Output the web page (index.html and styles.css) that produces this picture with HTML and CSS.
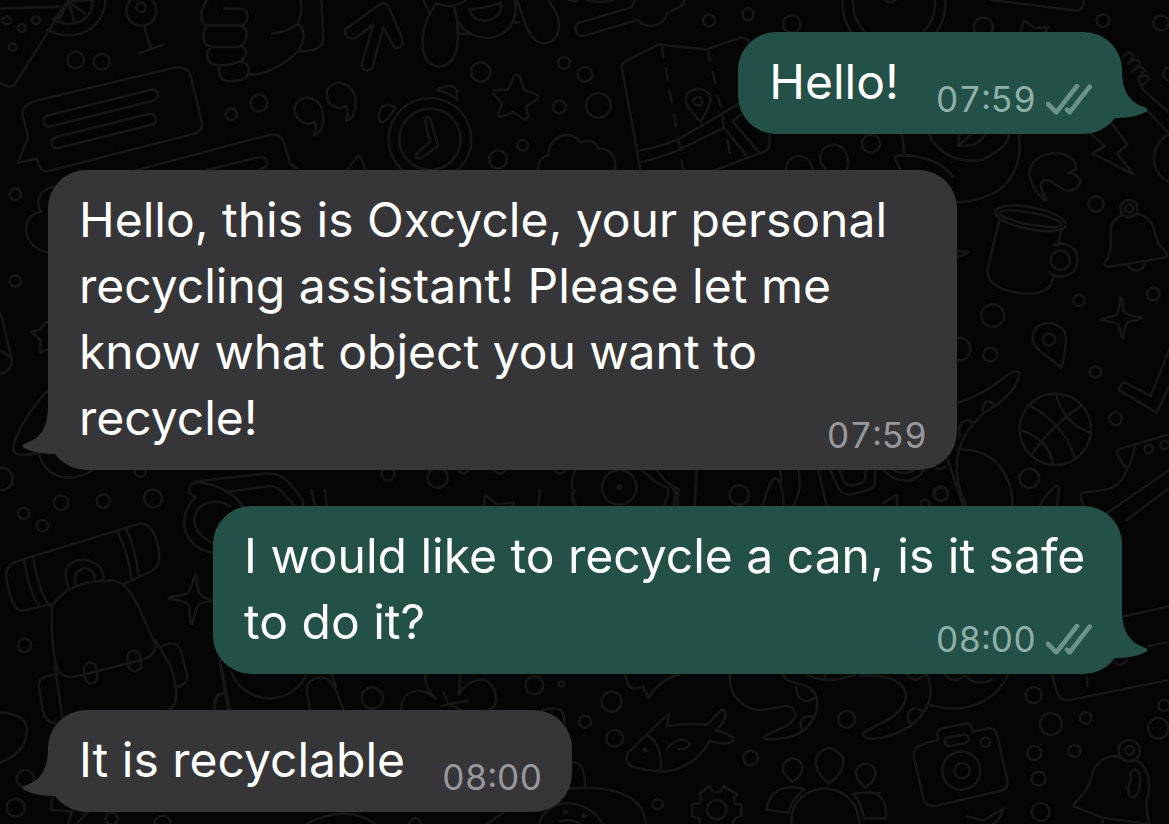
FILE: index.html
```
<!DOCTYPE html>
<html lang="en">
<head>
    <meta charset="UTF-8">
    <meta name="viewport" content="width=device-width, initial-scale=1.0">
    <title>Oxcycle chat</title>
    <link rel="stylesheet" href="styles.css">
</head>
<body>
  <!-- doodle wallpaper -->
  <svg class="wallpaper" viewBox="0 0 3507 2472" preserveAspectRatio="xMidYMid slice" aria-hidden="true">
    <!-- pizza, lemon, cocktail, fist, arrow -->
    <g>
      <path d="M0 26L180 20M0 247Q28 266 42 256L205 0M175 65L205 5L222 62M205 5L255 40M205 5L160 60M205 5L270 0M278 0Q276 70 205 72Q180 70 165 60M316 0C312 92 220 130 142 90"/>
      <circle cx="20" cy="61" r="12"/><circle cx="66" cy="84" r="12"/><circle cx="108" cy="61" r="12"/><circle cx="38" cy="142" r="11"/>
      <circle cx="227" cy="180" r="25"/><circle cx="305" cy="185" r="24"/>
      <circle cx="424" cy="32" r="45"/><circle cx="423" cy="22" r="14"/>
      <path d="M432 78L453 146M415 160L490 134"/>
      <path d="M622 0C604 20 600 50 608 68Q612 76 625 76L720 76C748 70 750 30 725 27L673 25M622 76C606 90 606 125 622 136Q632 141 650 141L715 141C748 130 746 82 722 77M632 142C616 155 620 185 640 193Q670 200 705 190C744 178 744 146 728 140M658 198C652 220 664 244 690 244L722 240C755 230 752 190 728 186M748 224C800 226 860 190 895 152C920 118 912 80 892 72Q908 40 902 0M892 72Q870 94 817 101M964 0L970 120C968 145 935 154 902 154"/>
      <path d="M1036 88L1138 14Q1155 2 1166 22L1205 110Q1214 140 1192 144Q1184 145 1178 134L1150 82L1118 200Q1108 218 1092 208Q1084 202 1086 190L1120 74L1068 113Q1046 120 1036 100Z"/>
    </g>
    <!-- speech bubbles and commas -->
    <g>
      <path d="M110 302L520 204Q562 196 572 228L606 370Q608 394 580 402L150 512Q128 518 120 500L110 476L54 488L84 412L68 346Q64 314 110 302Z"/>
      <rect x="125" y="307" width="354" height="34" rx="17" transform="rotate(-14 302 324)"/>
      <rect x="150" y="376" width="322" height="34" rx="17" transform="rotate(-14 311 393)"/>
      <path d="M410 510L800 407Q842 396 852 428L872 494L890 504M620 510L775 472Q802 468 802 488Q804 500 780 508"/>
      <circle cx="694" cy="343" r="17"/><circle cx="777" cy="309" r="25"/>
      <path d="M945 366C915 380 884 360 884 328C886 285 955 278 967 330C974 370 964 400 942 406Q950 386 945 366ZM1038 318C1010 332 980 315 980 282C984 235 1056 236 1066 295C1070 330 1060 358 1038 362Q1046 340 1038 318Z"/>
      <path d="M1040 514L1070 470Q1077 464 1082 474L1100 514"/>
    </g>
    <!-- dog, clock, star, bone, map -->
    <g transform="translate(1140)">
      <path d="M130 0L150 45M165 15C120 80 115 160 150 190C185 215 225 190 232 135Q238 70 222 20M170 10Q220 30 258 0M232 100L268 102M222 20C225 80 275 115 325 114C385 108 415 60 404 0M404 68L418 66M412 0C430 60 450 130 490 130C535 130 545 80 530 40L505 0M268 28Q330 24 362 8C370 45 335 64 310 62Q275 58 268 28Z"/>
      <path d="M568 0L590 4M620 0Q660 12 700 0M764 0L755 22L598 68Q582 76 588 94Q596 112 618 106L772 60C800 90 852 80 862 38L905 18Q914 10 912 0"/>
      <circle cx="302" cy="216" r="29"/><circle cx="552" cy="189" r="18"/><circle cx="615" cy="223" r="22"/><circle cx="538" cy="321" r="19"/><circle cx="655" cy="316" r="37"/><circle cx="428" cy="436" r="16"/><circle cx="354" cy="478" r="27"/><circle cx="987" cy="62" r="18"/><circle cx="1104" cy="43" r="17"/>
      <path d="M402 230Q412 218 420 232L432 270L466 282Q482 290 468 300L438 320L444 350Q440 364 426 354L400 336L366 350Q350 350 356 338L366 308L340 282Q336 270 350 270L384 268Z"/>
      <circle cx="150" cy="418" r="124"/><circle cx="150" cy="418" r="92"/>
      <path d="M134 356Q144 344 152 360L172 430Q176 438 166 444L126 474Q106 480 108 464L150 424ZM170 270Q216 246 230 272L232 298Q200 276 170 270ZM46 322Q10 302 -2 335Q-8 360 6 368Q20 366 46 322Z"/>
      <path d="M474 514Q470 474 506 466C505 405 575 385 602 428Q640 412 656 446C695 445 712 475 704 514"/>
      <path d="M740 182L835 134L980 148L1080 114Q1100 110 1110 130M782 514L726 206Q722 190 740 182"/>
      <path d="M846 140L850 172M858 204L864 238M868 274L876 308M882 344L888 380M984 150L990 182M998 216L1006 250M1012 286L1022 318M1042 422L1050 460"/>
      <path d="M780 452Q830 444 895 418L1075 312M784 486Q850 470 905 446L1030 384M893 418L904 450M904 480L910 514M1028 350L1032 384L1100 466M1080 346L1058 364L1136 456M1170 400L1168 440Q1160 456 1140 460L1000 512"/>
      <path d="M962 366C930 330 912 310 918 292C926 258 985 258 992 294Q992 312 962 366Z"/><circle cx="954" cy="304" r="13"/>
    </g>
    <!-- plate, toothbrush, avocado -->
    <g transform="translate(2190)">
      <circle cx="492" cy="10" r="154"/><circle cx="492" cy="10" r="123"/><path d="M466 0Q480 16 496 0"/>
      <circle cx="54" cy="43" r="17"/><circle cx="185" cy="72" r="26"/><circle cx="760" cy="82" r="29"/><circle cx="1119" cy="62" r="19"/><circle cx="1293" cy="69" r="23"/><circle cx="1320" cy="222" r="20"/><circle cx="423" cy="431" r="27"/>
      <path d="M785 0L1040 32Q1060 34 1062 0M872 96L882 62L914 84L955 82L945 96"/>
      <path d="M1180 170Q1196 146 1212 168L1202 182M1194 190Q1220 168 1230 190L1214 208M1208 214Q1234 190 1244 212L1226 230M1224 236Q1248 216 1258 236L1240 254M1226 240L1240 270L1320 340M1240 320L1317 400Q1260 440 1275 500Q1290 535 1317 545"/>
      <path d="M168 510C166 460 240 450 248 510M290 510C255 480 270 434 314 434C350 438 360 480 350 510M515 400L523 462"/>
      <path d="M595 400C625 470 700 490 755 480C800 460 835 430 838 400M866 400C880 490 840 560 780 585Q730 605 670 608M690 400L682 438L728 435Q755 422 768 400M682 438L725 402M668 530Q620 465 510 466Q490 466 498 482L512 512"/>
    </g>
    <g transform="translate(2820 360)">
      <path d="M316 241C285 220 262 170 270 150C280 100 360 85 395 115Q415 138 405 150L384 158Q418 160 420 188Q412 218 372 210C345 195 330 175 310 182C298 190 302 210 320 240Z"/>
      <path d="M445 35L494 78L457 100L580 163L532 100L562 75L515 10"/>
      <!-- mug -->
      <ellipse cx="272" cy="295" rx="108" ry="33" transform="rotate(11 272 295)"/><ellipse cx="272" cy="296" rx="94" ry="18" transform="rotate(11 272 296)"/>
      <path d="M178 302L142 450C140 500 210 524 280 520Q335 516 340 470M362 335L356 366M340 376C375 362 415 380 412 424C408 470 355 482 328 456"/><circle cx="361" cy="421" r="29"/>
      <!-- bell -->
      <circle cx="567" cy="266" r="26"/><circle cx="567" cy="266" r="12"/>
      <path d="M548 284C510 300 510 330 512 360Q516 400 494 430Q492 442 510 440L670 414Q688 408 678 398C650 370 648 350 640 320Q625 285 588 282M564 435C575 460 612 455 614 428"/>
      <circle cx="468" cy="252" r="23"/><circle cx="417" cy="541" r="17"/><circle cx="640" cy="522" r="19"/><circle cx="158" cy="587" r="34"/><circle cx="151" cy="704" r="21"/><circle cx="56" cy="687" r="35"/><circle cx="466" cy="756" r="17"/><circle cx="527" cy="896" r="19"/><circle cx="268" cy="1075" r="29"/><circle cx="4" cy="1123" r="20"/>
      <path d="M541 532Q548 532 550 570Q554 586 606 592Q606 600 566 604Q556 610 548 656Q544 656 538 620Q534 606 482 600Q484 594 524 588Q538 580 541 532Z"/>
      <path d="M364 744C330 710 274 690 278 650C284 590 380 598 378 660Q376 700 364 744Z"/><circle cx="327" cy="659" r="18"/>
      <path d="M50 392L84 396Q70 408 50 410"/>
      <!-- ball -->
      <circle cx="346" cy="928" r="107"/>
      <path d="M268 856Q370 910 404 1010M348 822Q370 910 450 938M426 856Q330 920 274 1006M248 932Q330 960 338 1034"/>
      <path d="M50 850C110 830 160 800 195 770Q230 745 238 758C235 810 180 850 130 880C90 920 50 960 50 1050Q55 1110 80 1158M128 872Q132 842 148 845Q162 850 164 860M60 948C50 910 75 892 100 908M50 990C150 980 215 1050 218 1158M20 1010L70 1158M298 1158Q340 1090 356 1100Q358 1120 350 1158"/>
      <path d="M687 690L632 828L556 788Q546 786 536 810L650 878L687 800M687 943L536 988Q520 1000 562 1046C580 1020 580 1000 584 978M562 1046C550 1080 530 1106 490 1110L425 1118Q420 1130 430 1158M500 1180L687 1050M560 1200L687 1105"/>
      <circle cx="626" cy="987" r="13"/><circle cx="674" cy="975" r="13"/>
    </g>
    <!-- left edge -->
    <g transform="translate(0 480)">
      <circle cx="46" cy="103" r="17"/><circle cx="46" cy="363" r="17"/>
      <path d="M160 80C115 90 105 130 124 156C60 160 55 270 160 280M160 480L134 488L120 510L94 515L122 540L120 578L160 560M0 460Q10 480 14 510L36 600Q34 636 0 640M0 570L34 594M150 686C80 750 35 850 40 870Q44 888 80 884L110 880"/>
    </g>
    <!-- backpack -->
    <g transform="translate(0 1200)">
      <path d="M118 165C140 240 220 250 280 208"/>
      <circle cx="4" cy="237" r="34"/><circle cx="71" cy="340" r="17"/><circle cx="127" cy="377" r="17"/><circle cx="183" cy="308" r="22"/><circle cx="310" cy="303" r="20"/><circle cx="459" cy="295" r="27"/><circle cx="421" cy="214" r="17"/><circle cx="74" cy="736" r="20"/><circle cx="76" cy="1136" r="26"/><circle cx="47" cy="1223" r="27"/><circle cx="335" cy="1256" r="18"/><circle cx="488" cy="1272" r="25"/>
      <path d="M376 550L450 515C475 505 480 480 478 462C470 400 450 365 415 372L50 484C20 496 16 520 20 540C30 600 45 635 70 632L156 612M72 480C80 530 95 590 118 618M100 470C108 540 130 590 145 612M352 394C375 440 390 490 394 540M378 386C400 430 410 480 416 528"/>
      <path d="M205 560C180 500 215 478 255 480C300 484 315 520 308 542M226 550C218 515 245 504 258 505Q284 508 284 540"/>
      <path d="M155 620C190 560 260 540 340 542C380 548 400 590 420 630L465 730Q470 765 430 778L225 830Q180 836 170 800C155 740 155 680 155 620ZM165 800L186 950M465 720C500 780 520 800 525 850Q538 910 505 932M484 740C520 720 535 730 545 760L562 830Q560 855 530 862M172 822L140 828Q115 835 116 860L128 930Q138 970 168 970"/>
      <rect x="253" y="788" width="38" height="62" rx="19" transform="rotate(-8 272 819)"/><rect x="384" y="752" width="38" height="62" rx="19" transform="rotate(-8 403 783)"/>
      <path d="M640 604Q600 602 592 620L576 672Q570 674 568 620Q562 602 506 596Q510 590 555 584Q570 580 586 522Q592 524 592 560Q596 596 640 600"/>
      <path d="M600 245L585 247Q562 255 568 278L585 292C520 360 560 450 640 458M640 428C560 400 570 310 640 306Q670 304 690 320M660 790L684 930M668 880Q640 880 642 930"/>
      <path d="M0 938C60 940 85 960 80 1000C75 1050 40 1070 0 1088M158 1190L152 1230L215 1235L205 1272M262 1236L230 1272"/>
    </g>
    <!-- guitar, watch and boots between the second and third message -->
    <g transform="translate(600 1380)">
      <path d="M-15 65L200 40Q245 40 270 70L308 120Q312 130 305 140M78 96L210 78Q235 80 250 100L285 140M-15 65Q85 75 130 140M335 90L345 140M376 90L380 140M1020 90L1015 140M1125 90Q1105 115 1130 140M850 140L856 105L890 132L942 128L936 140"/>
      <circle cx="564" cy="42" r="20"/><circle cx="713" cy="53" r="30"/><circle cx="790" cy="24" r="16"/><circle cx="900" cy="24" r="17"/><circle cx="1080" cy="24" r="16"/>
    </g>
    <g transform="translate(1680 1320)">
      <path d="M45 90Q25 140 48 198M245 90L285 125L325 145C325 165 320 180 312 198M290 90L318 125L355 148L352 198M335 140L346 155L342 198M410 90L404 198M606 198C625 150 630 115 648 115Q665 120 672 198M660 90L664 125M715 90C725 130 715 170 700 198M775 90L800 198M810 90L832 138Q842 162 870 164L918 152Q945 145 945 125L945 90M838 90L852 125Q860 138 880 136L904 130Q918 124 918 90M972 90Q1000 125 1045 122Q1075 118 1092 90M1000 90Q1030 108 1062 90M968 190L1010 165Q1015 175 1010 198M1125 80Q1140 95 1155 80"/>
      <circle cx="178" cy="142" r="52"/><circle class="dot" cx="178" cy="142" r="10"/><circle cx="538" cy="165" r="29"/><circle cx="1142" cy="161" r="22"/><circle cx="1096" cy="192" r="13"/>
    </g>
    <!-- fish, gear, paw -->
    <g transform="translate(1680 1980)">
      <path d="M195 40Q205 90 225 86L250 80L265 114C290 75 310 60 358 42M510 40C500 110 560 155 610 150L680 138Q712 145 705 170C690 205 620 215 610 234Q630 245 700 228C770 200 790 120 755 90C730 60 680 80 668 40M710 80C705 120 745 135 764 112M725 208C712 175 745 160 762 175M740 44Q800 75 885 44M795 44L792 58"/>
      <circle cx="155" cy="125" r="30"/><circle cx="75" cy="185" r="18"/><circle cx="164" cy="235" r="25"/><circle cx="572" cy="294" r="22"/><circle cx="860" cy="178" r="25"/><circle cx="293" cy="433" r="15"/><circle cx="4" cy="72" r="8"/>
      <path d="M203 280L262 222L325 162Q330 160 320 198Q380 188 442 194L485 150Q496 146 496 170Q490 190 468 212Q510 220 522 238Q510 260 450 242C410 310 360 332 310 334Q260 332 215 320Q192 305 203 280ZM262 225C295 245 305 280 303 332M320 268C345 235 370 230 390 252Q380 268 356 268"/><circle class="dot" cx="255" cy="270" r="8"/>
      <circle cx="470" cy="449" r="29"/>
      <path d="M420 492L418 476L397 468L397 432L420 430Q428 420 418 402L448 378L458 394Q470 398 484 394L490 378L530 402Q514 420 526 432L544 434L544 468L526 474L516 492"/>
      <path d="M960 400Q920 395 880 402Q905 430 912 475L960 475M694 492C690 420 745 385 800 386C860 392 895 430 898 492M732 388C680 370 625 390 620 450L685 458Q695 420 732 388Z"/>
      <path d="M697 366C670 345 664 325 672 310Q698 280 724 310C732 330 722 350 697 366ZM806 370C775 345 762 315 770 290Q805 240 848 290C856 318 838 350 806 370ZM916 382C890 362 884 340 892 325Q918 296 944 325C952 345 940 368 916 382Z"/>
      <path d="M0 146Q14 160 14 185M40 308Q72 300 76 380M0 388C100 376 250 380 258 492M0 430Q90 425 128 492M0 484Q40 476 60 492"/><circle class="dot" cx="16" cy="456" r="8"/><circle class="dot" cx="72" cy="467" r="8"/>
    </g>
    <!-- camera and second bell -->
    <g transform="translate(2580 1800)">
      <path d="M0 226C60 226 135 230 138 290C130 360 20 380 8 402Q15 424 70 412C170 390 240 310 200 222M150 370C130 330 165 315 188 334M212 316C300 340 400 320 445 222M140 222Q165 255 195 222M256 222Q280 258 315 226Q345 260 395 240M576 222L592 282Q602 304 630 300L927 240M680 230L683 258M786 50L927 20M866 138L927 126M765 188Q780 206 800 180"/>
      <path d="M190 432L234 420L232 398Q234 388 250 384L320 370Q334 370 338 395L385 385Q405 382 412 408L442 540Q446 566 425 572L225 618Q200 622 190 596L162 470Q158 440 190 432Z"/>
      <circle cx="304" cy="512" r="57"/><circle cx="306" cy="512" r="23"/><circle cx="376" cy="427" r="14"/><rect x="254" y="408" width="72" height="26" rx="13" transform="rotate(-11 290 421)"/>
      <circle cx="521" cy="285" r="24"/><circle cx="573" cy="372" r="33"/><circle cx="677" cy="354" r="17"/><circle cx="523" cy="459" r="21"/><circle cx="643" cy="453" r="18"/><circle cx="536" cy="536" r="21"/><circle cx="542" cy="636" r="27"/><circle cx="895" cy="385" r="31"/><circle cx="912" cy="317" r="17"/>
      <circle cx="808" cy="452" r="32"/><circle cx="809" cy="451" r="13"/>
      <path d="M785 470C720 460 700 500 692 540C685 570 650 600 640 618L730 654L865 672M824 478C870 500 875 560 860 600Q858 640 868 672M724 654L730 672M822 508Q838 505 840 540Q838 590 820 592Q800 590 806 560Q814 545 810 520ZM322 650L370 662L430 626Q420 660 400 672M30 576C64 580 80 610 78 655L60 656"/>
    </g>
    <!-- flower row -->
    <g transform="translate(510 1980)">
      <path d="M185 40C230 140 370 140 410 40M150 0L180 150M162 98Q130 110 134 150M420 150L410 90C410 60 440 48 465 54Q490 58 520 150M484 40L498 80M694 150C690 100 740 70 798 116C770 90 760 60 770 40M865 104Q870 80 870 40M865 104C900 50 960 40 976 100Q985 140 955 150M820 96L835 132L815 138M835 132L895 122M840 134L870 148M1115 150Q1175 138 1178 160L1184 190M410 492Q530 430 615 492M716 492Q735 455 755 492M950 492L1000 458M1105 492Q1130 440 1170 432"/>
      <circle cx="607" cy="114" r="32"/><circle cx="1093" cy="76" r="27"/>
    </g>
  </svg>

  <main class="chat">
    <article class="message sent">
      <p class="text">Hello!
        <span class="meta">
          <time datetime="07:59">07:59</time>
          <svg class="ticks" viewBox="0 0 138 93" role="img" aria-label="Delivered"><path d="M6 60L31 85L93 6M63 77L71 85L131 8"/></svg>
        </span>
      </p>
      <svg class="tail" viewBox="0 0 48 50" aria-hidden="true"><path d="M0 0H22C22 22 30 33 46 38Q49 40 46 42Q34 48 16 48L8 50H0Z"/></svg>
    </article>

    <article class="message received">
      <p class="text">Hello, this is Oxcycle, your personal recycling assistant! Please let me know what object you want to recycle!
        <span class="meta">
          <time datetime="07:59">07:59</time>
        </span>
      </p>
      <svg class="tail" viewBox="0 0 48 50" aria-hidden="true"><path d="M0 0H22C22 22 30 33 46 38Q49 40 46 42Q34 48 16 48L8 50H0Z"/></svg>
    </article>

    <article class="message sent">
      <p class="text">I would like to recycle a can, is it safe to do it?
        <span class="meta">
          <time datetime="08:00">08:00</time>
          <svg class="ticks" viewBox="0 0 138 93" role="img" aria-label="Delivered"><path d="M6 60L31 85L93 6M63 77L71 85L131 8"/></svg>
        </span>
      </p>
      <svg class="tail" viewBox="0 0 48 50" aria-hidden="true"><path d="M0 0H22C22 22 30 33 46 38Q49 40 46 42Q34 48 16 48L8 50H0Z"/></svg>
    </article>

    <article class="message received">
      <p class="text">It is recyclable
        <span class="meta">
          <time datetime="08:00">08:00</time>
        </span>
      </p>
      <svg class="tail" viewBox="0 0 48 50" aria-hidden="true"><path d="M0 0H22C22 22 30 33 46 38Q49 40 46 42Q34 48 16 48L8 50H0Z"/></svg>
    </article>
  </main>
</body>
</html>
```
FILE: styles.css
```
* {
  box-sizing: border-box;
}
body {
  margin: 0;
  background: #050505;
  color: #fff;
  font-family: Inter, "Liberation Sans", sans-serif;
}

.wallpaper {
  position: fixed;
  top: 0;
  left: 0;
  z-index: -1;
  width: 100%;
  height: 100%;
  fill: none;
  stroke: #171717;
  stroke-width: 8;
  stroke-linecap: round;
  stroke-linejoin: round;
}
.wallpaper .dot {
  fill: #171717;
  stroke: none;
}

.chat {
  display: flex;
  flex-direction: column;
  gap: 36px;
  padding: 32px 47px 12px 48px;
}

.message {
  position: relative;
  max-width: calc(100% - 165px);
  padding: 17px 30px 19px 31px;
  border-radius: 38px;
}
.sent {
  align-self: flex-end;
  background: #235147;
}
.received {
  align-self: flex-start;
  background: #363638;
}

.text {
  display: flow-root;
  margin: 0;
  font-size: 48px;
  line-height: 66px;
}

/* floats beside the last line of the text */
.meta {
  float: right;
  display: flex;
  align-items: center;
  gap: 10px;
  margin: 34px 0 0 37px;
  color: #98989d;
  font-size: 35px;
  font-variant-numeric: tabular-nums;
  line-height: 32px;
}
.sent .meta {
  color: #8fb0a8;
}
.ticks {
  width: 46px;
  height: 31px;
  fill: none;
  stroke: #6b9389;
  stroke-width: 14;
  stroke-linecap: round;
  stroke-linejoin: round;
}

.tail {
  position: absolute;
  right: -26px;
  bottom: 14px;
  width: 48px;
  height: 50px;
  fill: #235147;
}
.received .tail {
  right: auto;
  left: -26px;
  fill: #363638;
  transform: scaleX(-1);
}
```
